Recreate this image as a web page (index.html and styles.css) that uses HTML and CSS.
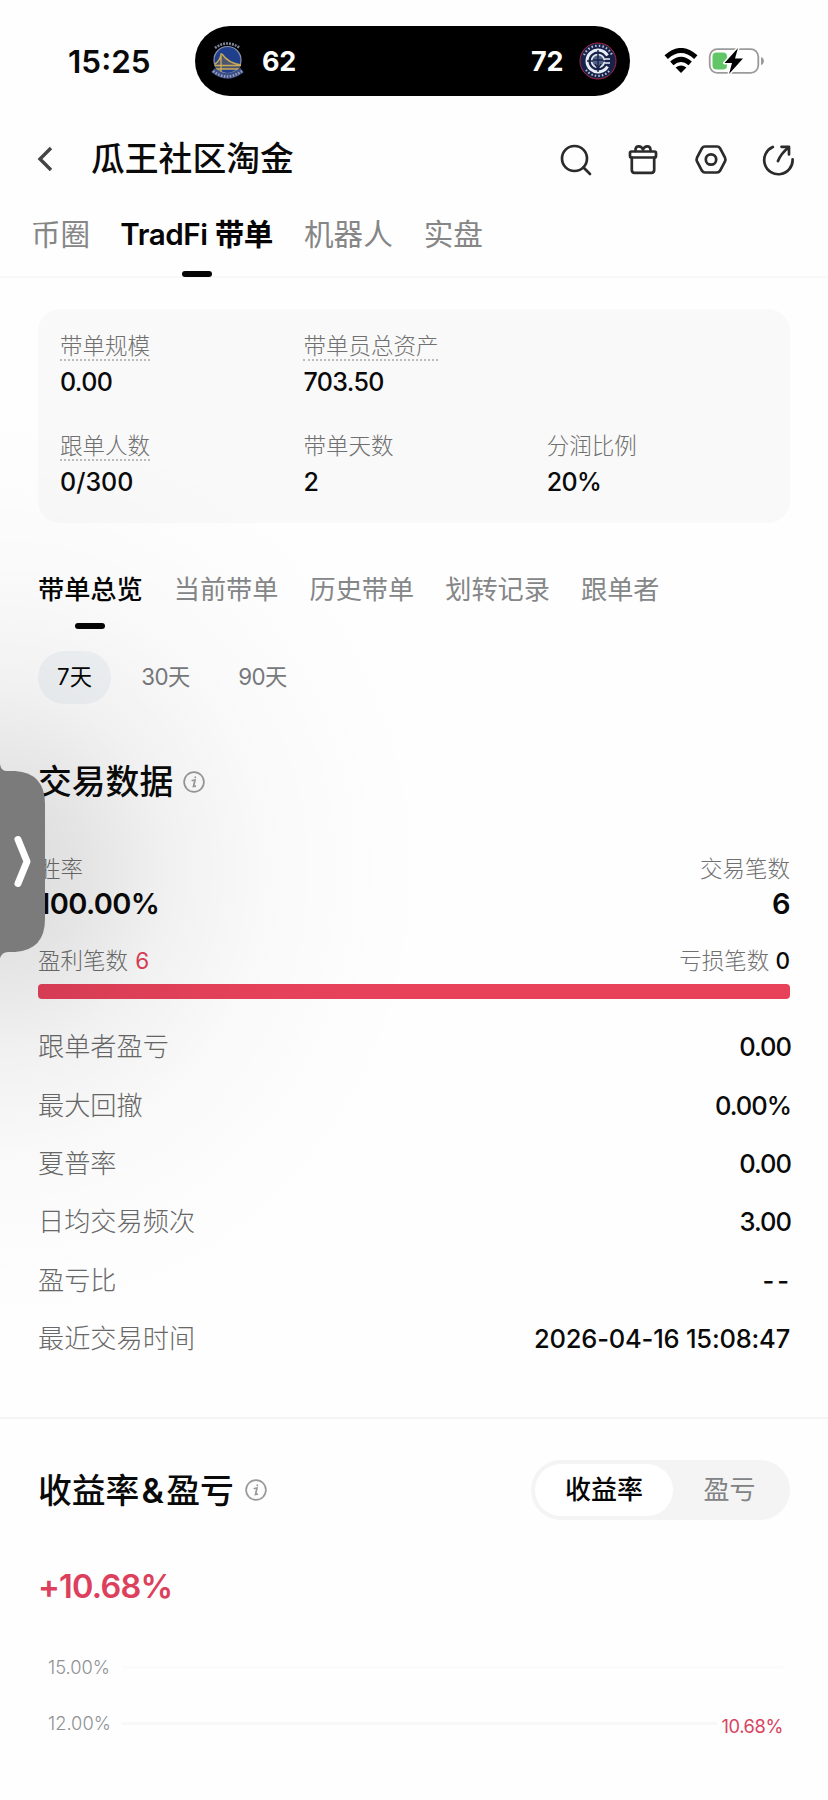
FILE: index.html
```html
<!DOCTYPE html>
<html lang="zh-CN">
<head>
<meta charset="utf-8">
<title>瓜王社区淘金</title>
<link rel="stylesheet" href="styles.css">
</head>
<body>
<div class="screen">
  <header class="status">
    <span class="time">15:25</span>
    <div class="island">
      <svg class="logo-gs" width="34" height="40" viewBox="0 0 34 40">
        <circle cx="16.500" cy="19" r="13.500" fill="#1f3f8c" stroke="#8a93ad" stroke-width="1.200"/>
        <path d="M4 24Q9 23 10 14Q18 22 30 24L28 28H5Z" fill="#4c5570"/>
        <path d="M3.500 24.500H30M5 28H28M10 12V31M11 13Q17 22 30 24M10 14Q8 21 4 23" fill="none" stroke="#c9a957" stroke-width="1.400"/>
        <path d="M4 7Q16 -2 29 7" fill="none" stroke="#7e8499" stroke-width="2.600" stroke-dasharray="2 1"/>
        <path d="M2 29Q16 41 31 29" fill="none" stroke="#3d4f8a" stroke-width="5.500"/>
        <path d="M2 30Q16 41 31 30" fill="none" stroke="#959db8" stroke-width="2.600" stroke-dasharray="1.600 1.400"/>
      </svg>
      <span class="score">62</span>
      <span class="score score-away">72</span>
      <svg class="logo-lac" width="38" height="38" viewBox="0 0 38 38">
        <circle cx="19" cy="19" r="18" fill="#17224a" stroke="#a8284a" stroke-width="1"/>
        <path d="M5 13A15.200 15.200 0 0 1 33 13" fill="none" stroke="#b9bfd2" stroke-width="2.200" stroke-dasharray="1.500 2.200"/>
        <path d="M7 28A15.200 15.200 0 0 0 31 28" fill="none" stroke="#b9bfd2" stroke-width="2.200" stroke-dasharray="1.500 2"/>
        <path d="M28.500 13.500A11 11 0 1 0 28.500 24.500" fill="none" stroke="#e9edf5" stroke-width="3"/>
        <circle cx="19" cy="19" r="6.500" fill="#526288" stroke="#e9edf5" stroke-width="1.600"/>
        <path d="M19 8V30M8 19H14M24 19H31M14 18H24M16 22L19 27L22 22" fill="none" stroke="#17224a" stroke-width="1.400"/>
        <path d="M26 17H31M26 21H31" stroke="#e9edf5" stroke-width="1.500"/>
      </svg>
    </div>
    <svg class="wifi" width="34" height="26" viewBox="0 0 34 26">
      <path d="M2.200 9.200Q17 -4.200 31.800 9.200M7.800 15.400Q17 7.400 26.200 15.400" fill="none" stroke="#000" stroke-width="5"/>
      <path d="M17 25L11.600 19.600Q17 15.200 22.400 19.600Z" fill="#000"/>
    </svg>
    <svg class="battery" width="57" height="28" viewBox="0 0 57 28">
      <rect x="1.700" y="2.200" width="48.600" height="23.600" rx="7.500" fill="#fff" stroke="#9b9b9b" stroke-width="1.800"/>
      <path d="M8.500 5.500H15Q19 5.500 19 9.500V18.500Q19 22.500 15 22.500H8.500Q4.500 22.500 4.500 18.500V9.500Q4.500 5.500 8.500 5.500Z" fill="#61c766"/>
      <path d="M53 10Q56 11 56 14T53 18Z" fill="#9b9b9b"/>
      <path d="M30 1L16.500 16H24L21 27L35 11.500H27Z" fill="#000" stroke="#fff" stroke-width="3" paint-order="stroke" stroke-linejoin="round"/>
    </svg>
  </header>

  <nav class="header">
    <svg class="back" width="18" height="28" viewBox="0 0 18 28"><path d="M15 3L4 14L15 25" fill="none" stroke="#444" stroke-width="3.400"/></svg>
    <h1 class="title">瓜王社区淘金</h1>
    <div class="actions">
      <svg width="34" height="34" viewBox="0 0 34 34"><g><circle cx="15.500" cy="15.500" r="12.500"/><path d="M24.500 24.500L31 31"/></g></svg>
      <svg width="34" height="34" viewBox="0 0 34 34"><g><rect x="4" y="8.500" width="26" height="6" rx="1.500"/><path d="M5.800 14.500V27Q5.800 29.800 8.500 29.800H25.500Q28.200 29.800 28.200 27V14.500M9.500 8C9 2 15 2 17 6.500C19 2 25 2 24.500 8"/></g></svg>
      <svg width="34" height="34" viewBox="0 0 34 34"><g><path d="M11 3.500H23Q25 3.500 26 5.200L31 14.700Q31.800 16.500 31 18.300L26 27.800Q25 29.500 23 29.500H11Q9 29.500 8 27.800L3 18.300Q2.200 16.500 3 14.700L8 5.200Q9 3.500 11 3.500Z"/><circle cx="17" cy="16.500" r="5.200"/></g></svg>
      <svg width="34" height="34" viewBox="0 0 34 34"><g><path d="M11.800 4A14.200 14.200 0 1 0 31.600 16.300M17 18Q20 10.500 27.500 4.500M20.500 3.800H28V11.500"/></g></svg>
    </div>
  </nav>

  <div class="tabs">
    <span>币圈</span>
    <span class="on tradfi">TradFi 带单</span>
    <span>机器人</span>
    <span>实盘</span>
  </div>

  <section class="card">
    <div class="stat"><span class="label hint">带单规模</span><b>0.00</b></div>
    <div class="stat wide"><span class="label hint">带单员总资产</span><b>703.50</b></div>
    <div class="stat"><span class="label hint">跟单人数</span><b class="slashed">0/300</b></div>
    <div class="stat"><span class="label">带单天数</span><b>2</b></div>
    <div class="stat"><span class="label">分润比例</span><b>20%</b></div>
  </section>

  <div class="subtabs">
    <span class="on">带单总览</span><span>当前带单</span><span>历史带单</span><span>划转记录</span><span>跟单者</span>
  </div>

  <div class="chips"><span class="chip on">7天</span><span class="chip">30天</span><span class="chip">90天</span></div>

  <div class="heading heading-data">
    <h2>交易数据</h2>
    <svg class="info" width="22" height="22" viewBox="0 0 22 22"><circle cx="11" cy="11" r="9.900"/><path d="M9.300 9.500L12 9L10.500 15.500L12.300 15.200M12.300 6V6.500"/></svg>
  </div>

  <section class="winrate">
    <div class="pair"><span class="label">胜率</span><span class="label">交易笔数</span></div>
    <div class="pair big"><b>100.00%</b><b>6</b></div>
    <div class="pair counts"><span class="label">盈利笔数 <i class="red">6</i></span><span class="label">亏损笔数 <i>0</i></span></div>
    <div class="bar"></div>
  </section>

  <dl class="rows">
    <div><dt>跟单者盈亏</dt><dd>0.00</dd></div>
    <div><dt>最大回撤</dt><dd>0.00%</dd></div>
    <div><dt>夏普率</dt><dd>0.00</dd></div>
    <div><dt>日均交易频次</dt><dd>3.00</dd></div>
    <div><dt>盈亏比</dt><dd class="dash">--</dd></div>
    <div><dt>最近交易时间</dt><dd class="date">2026-04-16 15:08:47</dd></div>
  </dl>

  <div class="heading heading-profit">
    <h2>收益率<span class="amp">&amp;</span>盈亏</h2>
    <svg class="info" width="22" height="22" viewBox="0 0 22 22"><circle cx="11" cy="11" r="9.900"/><path d="M9.300 9.500L12 9L10.500 15.500L12.300 15.200M12.300 6V6.500"/></svg>
    <div class="segment"><span class="on">收益率</span><span>盈亏</span></div>
  </div>

  <div class="profit">+10.68%</div>

  <div class="chart">
    <div class="tick"><span>15.00%</span><i class="faint"></i></div>
    <div class="tick"><span>12.00%</span><i></i><em>10.68%</em></div>
  </div>

  <div class="shade"></div>
  <svg class="handle" width="46" height="196" viewBox="0 0 46 196">
    <path d="M0 0Q1 7 6 7H15Q45 9 45 40V155Q45 186 15 188H8Q2 188 0 194Z" fill="#7b7b7b"/>
    <path d="M18 76L27 98L18 120" transform="translate(0 -.5)" fill="none" stroke="#fff" stroke-width="7" stroke-linecap="round" stroke-linejoin="round"/>
  </svg>
</div>
</body>
</html>
```
FILE: styles.css
```css
* { box-sizing: border-box; }
body { margin: 0; background: #fefefe; }
.screen {
  position: relative; width: 828px; height: 1800px; overflow: hidden;
  font-family: Inter, "Noto Sans CJK SC", sans-serif; color: #0a0a0a;
  display: flex; flex-direction: column;
}
b, i, em, h1, h2, dl, dd { font-style: normal; margin: 0; }
svg { display: block; flex: none; }

.status { height: 122px; display: flex; align-items: center; padding-left: 68px; flex: none; }
.time { width: 127px; font-size: 31.500px; font-weight: 600; padding-top: 1px; }
.island {
  width: 435px; height: 70px; border-radius: 35px; background: #000; color: #fff;
  display: flex; align-items: center; padding: 0 13px 0 16px;
}
.score { font-size: 27px; font-weight: 700; margin-left: 17px; letter-spacing: -.4px; }
.score-away { margin-left: auto; margin-right: 16px; }
.wifi { margin-left: 34px; }
.battery { margin-left: 10px; }

.header { height: 72px; flex: none; display: flex; align-items: center; padding: 1px 32.600px 0 36px; }
.title { margin-left: 37px; font-size: 33.800px; font-weight: 500; line-height: 50px; }
.actions { margin-left: auto; display: flex; gap: 33.600px; padding-top: 2px; }
.actions g { fill: none; stroke: #2b2b2b; stroke-width: 2.700; stroke-linecap: round; stroke-linejoin: round; }

.tabs {
  height: 84px; flex: none; display: flex; gap: 31px; padding: 20px 31px 0;
  border-bottom: 2px solid #f8f8f8; font-size: 29.600px; line-height: 40px; color: #868686;
}
.tabs .on, .subtabs .on { color: #050505; font-weight: 500; position: relative; }
.tabs .tradfi { font-weight: 600; letter-spacing: -.42px; margin-left: -1px; }
.tabs .on::after, .subtabs .on::after {
  content: ""; position: absolute; left: 50%; margin-left: -15px; width: 30px; height: 6px; border-radius: 3px; background: #050505;
}
.tabs .on::after { top: 57px; }

.card {
  margin: 31px 38px 0; height: 214px; flex: none; background: #f9f9f9; border-radius: 22px;
  padding: 22px; display: grid; grid-template-columns: repeat(3, 243.400px); grid-template-rows: 100px 80px;
}
.stat { display: flex; flex-direction: column; align-items: flex-start; }
.stat.wide { grid-column: span 2; }
.label { height: 30px; font-size: 22.500px; line-height: 30px; font-weight: 300; color: #707070; }
.hint { border-bottom: 2px dotted #bbb; }
.stat b { font-size: 25px; font-weight: 500; line-height: 32px; margin-top: 5px; letter-spacing: -.6px; }
.stat .slashed { letter-spacing: 0; }

.subtabs { margin: 46px 38px 0; height: 63px; flex: none; display: flex; gap: 31px; font-size: 26.200px; line-height: 42px; color: #858688; }
.subtabs .on::after { top: 54px; }

.chips { margin: 19px 38px 0; display: flex; gap: 24px; flex: none; }
.chip { height: 53px; line-height: 51px; border-radius: 27px; font-size: 22.300px; letter-spacing: -.5px; color: #77797c; width: 73px; text-align: center; }
.chip.on { background: #f2f5f7; color: #050505; margin-right: -6px; letter-spacing: 0; }

.heading { display: flex; align-items: center; margin: 0 38px; height: 60px; flex: none; }
.heading h2 { font-size: 33.800px; font-weight: 500; line-height: 48px; }
.heading-data { margin-top: 48px; }
.info { margin-left: 10px; fill: none; stroke: #999; stroke-width: 1.700; stroke-linecap: round; }
.amp { margin: 0 2.500px 0 2px; font-weight: 600; }

.winrate { margin: 42px 38px 0; flex: none; }
.pair { display: flex; justify-content: space-between; }
.big { font-size: 29px; line-height: 38px; margin-top: 1px; }
.big b { font-weight: 600; letter-spacing: -.6px; }
.counts { margin-top: 23px; }
.counts i { font-weight: 500; color: #0a0a0a; }
.counts .red { color: #df4058; font-weight: 400; margin-left: 1px; }
.bar { height: 15px; border-radius: 4px; background: #e8425b; margin-top: 8px; }

.rows { margin: 19px 38px 0; flex: none; }
.rows div { height: 58.400px; display: flex; justify-content: space-between; align-items: center; line-height: 40px; }
.rows dt { font-size: 26.200px; font-weight: 300; color: #686868; }
.rows dd { font-size: 25.500px; font-weight: 500; letter-spacing: -1px; margin-right: -1px; }
.rows .date { letter-spacing: -.2px; margin-right: 0; }
.rows .dash { letter-spacing: 3px; margin-right: -2px; }

.heading-profit { margin: 49px 0 0; padding: 41px 38px 0; height: 102px; border-top: 2px solid #f4f4f4; }
.heading-profit h2 { padding-top: 2px; }
.heading-profit .info { margin-left: 11px; }
.segment { margin-left: auto; width: 259px; height: 60px; border-radius: 30px; background: #f4f4f5; padding: 4px; display: flex; }
.segment span { width: 138px; height: 52px; border-radius: 26px; text-align: center; line-height: 52px; font-size: 26px; color: #818284; }
.segment span + span { width: 113px; }
.segment .on { background: #fff; color: #050505; font-weight: 500; }

.profit { margin: 46px 38px 0; height: 44px; line-height: 44px; flex: none; font-size: 32.500px; font-weight: 600; letter-spacing: -.8px; color: #dc405c; }

.chart { margin: 44px 45px 0 48px; flex: none; }
.tick { height: 28px; margin-bottom: 28px; display: flex; align-items: center; font-size: 18.300px; color: #8e9295; font-weight: 300; }
.tick span { width: 74px; }
.tick i { flex: 1; height: 3px; background: #f8f8f8; }
.tick .faint { background: #fbfbfb; }
.tick em { color: #d84460; font-weight: 400; padding-left: 4px; margin-top: 5px; letter-spacing: -.4px; }

.shade {
  position: absolute; left: 0; top: 430px; width: 460px; height: 1000px; pointer-events: none;
  background: radial-gradient(ellipse 430px 460px at 0 44%, rgba(0,0,0,.14), rgba(0,0,0,.1) 20%, rgba(0,0,0,.05) 40%, rgba(0,0,0,.018) 62%, rgba(0,0,0,.006) 82%, transparent);
}
.handle { position: absolute; left: 0; top: 764px; }
```
